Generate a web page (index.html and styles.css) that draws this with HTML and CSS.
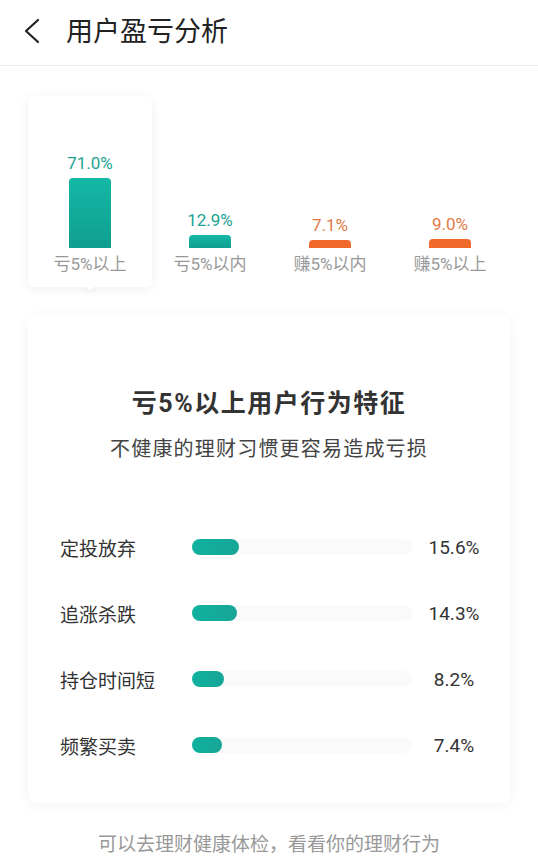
FILE: index.html
```html
<!DOCTYPE html>
<html lang="zh-CN">
<head>
    <meta charset="UTF-8">
    <meta name="viewport" content="width=device-width, initial-scale=1.0">
    <title>用户盈亏分析</title>
    <link rel="stylesheet" href="styles.css">
</head>
<body>

    <div class="header">
        <svg class="back" width="20" height="28" viewBox="0 0 20 28">
            <path d="M17 3 L5 14 L17 25" fill="none" stroke="#222" stroke-width="2.2" stroke-linecap="round" stroke-linejoin="round"/>
        </svg>
        <h1>用户盈亏分析</h1>
    </div>

    <div class="chart">
        <div class="col active">
            <span class="value loss">71.0%</span>
            <div class="bar loss-bar" style="height: 70px"></div>
            <span class="label">亏5%以上</span>
        </div>
        <div class="col">
            <span class="value loss">12.9%</span>
            <div class="bar loss-bar" style="height: 13px"></div>
            <span class="label">亏5%以内</span>
        </div>
        <div class="col">
            <span class="value gain">7.1%</span>
            <div class="bar gain-bar" style="height: 8px"></div>
            <span class="label">赚5%以内</span>
        </div>
        <div class="col">
            <span class="value gain">9.0%</span>
            <div class="bar gain-bar" style="height: 9px"></div>
            <span class="label">赚5%以上</span>
        </div>
    </div>

    <div class="card">
        <h2>亏5%以上用户行为特征</h2>
        <p class="subtitle">不健康的理财习惯更容易造成亏损</p>

        <ul class="rows">
            <li>
                <span class="name">定投放弃</span>
                <div class="track"><div class="fill" style="width: 47px"></div></div>
                <span class="pct">15.6%</span>
            </li>
            <li>
                <span class="name">追涨杀跌</span>
                <div class="track"><div class="fill" style="width: 45px"></div></div>
                <span class="pct">14.3%</span>
            </li>
            <li>
                <span class="name">持仓时间短</span>
                <div class="track"><div class="fill" style="width: 32px"></div></div>
                <span class="pct">8.2%</span>
            </li>
            <li>
                <span class="name">频繁买卖</span>
                <div class="track"><div class="fill" style="width: 30px"></div></div>
                <span class="pct">7.4%</span>
            </li>
        </ul>
    </div>

    <p class="footer">可以去理财健康体检，看看你的理财行为</p>

</body>
</html>
```

FILE: styles.css
```css
body {
    font-family: Roboto, "Noto Sans CJK SC", sans-serif;
    margin: 0;
    padding: 0;
    background-color: #fff;
    color: #333;
}

.header {
    height: 66px;
    display: flex;
    align-items: center;
    padding-left: 21px;
    border-bottom: 1px solid #eee;
    box-sizing: border-box;
}

.header .back {
    margin-right: 25px;
    margin-top: -4px;
}

.header h1 {
    margin: 0;
    font-size: 27px;
    font-weight: normal;
    color: #222;
    margin-top: -6px;
}

.chart {
    display: flex;
    margin: 32px 0 0 30px;
}

.col {
    position: relative;
    width: 120px;
    height: 187px;
    display: flex;
    flex-direction: column;
    align-items: center;
    justify-content: flex-end;
    padding-bottom: 10px;
    box-sizing: border-box;
}

.col.active {
    background: #fff;
    border-radius: 4px;
    box-shadow: 0 0 0 2px #fff, 0 2px 12px 2px rgba(0, 0, 0, 0.07);
}

.col.active::after {
    content: "";
    position: absolute;
    left: 50%;
    bottom: -6px;
    margin-left: -7px;
    border-left: 7px solid transparent;
    border-right: 7px solid transparent;
    border-top: 6px solid #fff;
    filter: drop-shadow(0 2px 1px rgba(0, 0, 0, 0.04));
}

.value {
    font-size: 17px;
    line-height: 20px;
    margin-bottom: 5px;
}

.value.loss {
    color: #1aa292;
}

.value.gain {
    color: #e27a47;
}

.bar {
    width: 42px;
    border-radius: 4px 4px 0 0;
}

.loss-bar {
    background: linear-gradient(to bottom, #15b8a6, #0f9e8f);
}

.gain-bar {
    background: #f0692b;
}

.label {
    font-size: 17px;
    line-height: 22px;
    margin-top: 5px;
    color: #999;
}

.card {
    margin: 30px 28px 0 28px;
    padding: 74px 14px 25px 32px;
    border-radius: 8px;
    background: #fff;
    box-shadow: 0 2px 14px rgba(0, 0, 0, 0.05);
    text-align: center;
}

.card h2 {
    margin: 0;
    padding-right: 18px;
    font-size: 25px;
    line-height: 30px;
    font-weight: bold;
    letter-spacing: 1.5px;
    color: #333;
}

.subtitle {
    margin: 16px 0 0 0;
    padding-right: 18px;
    font-size: 20px;
    line-height: 28px;
    letter-spacing: 1.2px;
    color: #444;
}

.rows {
    list-style: none;
    padding: 0;
    margin: 51px 0 0 0;
}

.rows li {
    display: grid;
    grid-template-columns: 132px 220px 84px;
    align-items: center;
    height: 66px;
}

.name {
    text-align: left;
    font-size: 19px;
    color: #333;
}

.track {
    height: 16px;
    border-radius: 8px;
    background: #fafafa;
}

.fill {
    height: 16px;
    border-radius: 8px;
    background: linear-gradient(to right, #0fb29e, #17a596);
}

.pct {
    font-size: 19px;
    color: #333;
    text-align: center;
}

.footer {
    margin: 29px 0 0 0;
    text-align: center;
    font-size: 19px;
    line-height: 26px;
    color: #999;
}
```
